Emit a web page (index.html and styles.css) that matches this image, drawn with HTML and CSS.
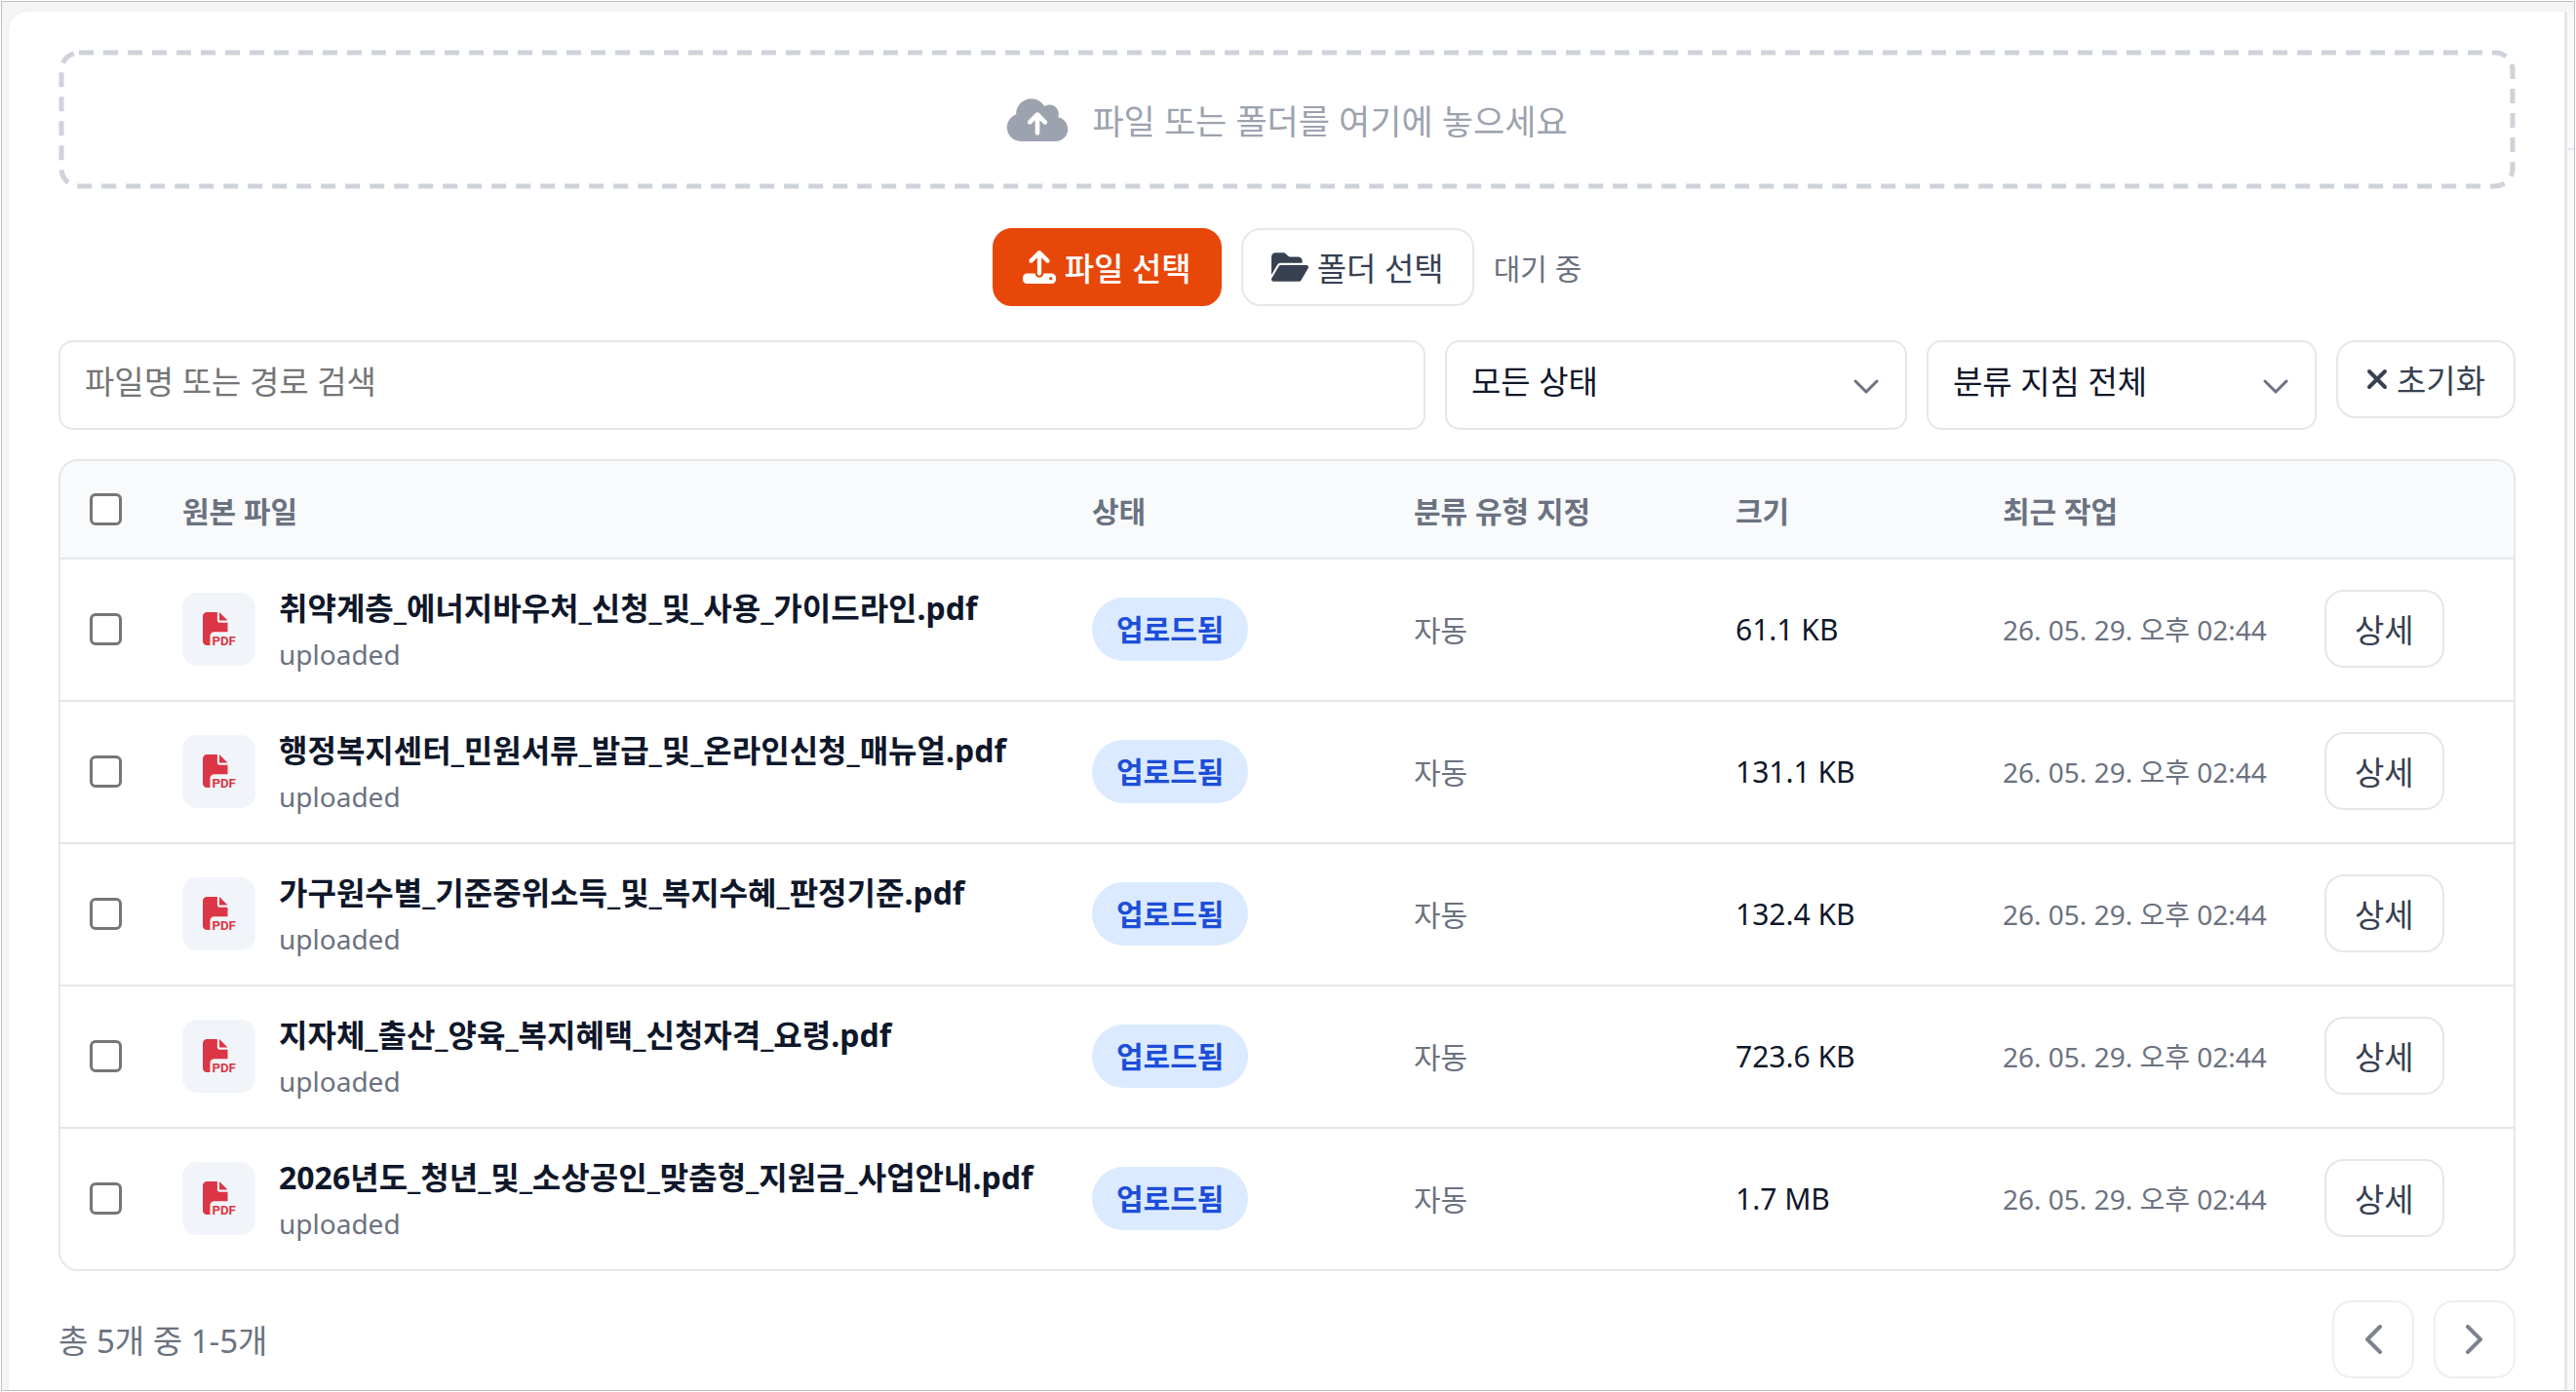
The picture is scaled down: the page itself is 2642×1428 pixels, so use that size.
FILE: index.html
```html
<!DOCTYPE html>
<html lang="ko">
<head>
    <meta charset="UTF-8">
    <meta name="viewport" content="width=device-width, initial-scale=1.0">
    <title>파일 업로드</title>
    <link rel="stylesheet" href="styles.css">
</head>
<body>

    <!-- 아이콘 모음 -->
    <svg class="icon-defs" aria-hidden="true">
        <symbol id="icon-cloud" viewBox="0 0 640 512">
            <path d="M144 480C64.500 480 0 415.500 0 336c0-62.800 40.200-116.200 96.200-135.900c-.1-2.700-.2-5.400-.2-8.100c0-88.400 71.600-160 160-160c59.300 0 111 32.200 138.700 80.200C409.900 102 428.300 96 448 96c53 0 96 43 96 96c0 12.200-2.300 23.800-6.400 34.600C596 238.400 640 290.100 640 352c0 70.700-57.300 128-128 128l-368 0zm79-217c-9.400 9.400-9.400 24.600 0 33.900s24.600 9.400 33.900 0l39-39L296 392c0 13.300 10.700 24 24 24s24-10.700 24-24l0-134.100 39 39c9.400 9.400 24.600 9.400 33.900 0s9.400-24.600 0-33.900l-80-80c-9.400-9.400-24.600-9.400-33.900 0l-80 80z"/>
        </symbol>
        <symbol id="icon-upload" viewBox="0 0 512 512">
            <path d="M288 109.300L288 352c0 17.700-14.300 32-32 32s-32-14.300-32-32l0-242.700-73.400 73.400c-12.500 12.500-32.800 12.500-45.300 0s-12.500-32.800 0-45.300l128-128c12.500-12.500 32.800-12.500 45.300 0l128 128c12.500 12.500 12.500 32.800 0 45.300s-32.800 12.500-45.300 0L288 109.300zM64 352l128 0c0 35.300 28.700 64 64 64s64-28.700 64-64l128 0c35.300 0 64 28.700 64 64l0 32c0 35.300-28.700 64-64 64L64 512c-35.300 0-64-28.700-64-64l0-32c0-35.300 28.700-64 64-64zM432 456a24 24 0 1 0 0-48 24 24 0 1 0 0 48z"/>
        </symbol>
        <symbol id="icon-folder" viewBox="0 0 576 512">
            <path d="M88.700 223.800L0 375.800 0 96C0 60.700 28.700 32 64 32l117.500 0c17 0 33.300 6.700 45.300 18.700l26.500 26.500c12 12 28.300 18.700 45.300 18.700L416 96c35.300 0 64 28.700 64 64l0 32-336 0c-22.800 0-43.800 12.100-55.300 31.800zm27.600 16.100C122.100 230 132.600 224 144 224l400 0c11.500 0 22 6.100 27.700 16.100s5.700 22.200-.1 32.100l-112 192C453.900 474 443.400 480 432 480L32 480c-11.500 0-22-6.100-27.700-16.100s-5.700-22.200 .1-32.100l112-192z"/>
        </symbol>
        <symbol id="icon-file" viewBox="0 0 512 512">
            <path d="M0 64C0 28.700 28.700 0 64 0L224 0l0 128c0 17.700 14.300 32 32 32l128 0 0 144-208 0c-35.300 0-64 28.700-64 64l0 144-48 0c-35.300 0-64-28.700-64-64L0 64zm384 64l-128 0L256 0 384 128z"/>
        </symbol>
        <symbol id="icon-close" viewBox="0 0 22 22">
            <path d="M3 3l16 16M19 3L3 19" fill="none" stroke="currentColor" stroke-width="4" stroke-linecap="round"/>
        </symbol>
        <symbol id="icon-down" viewBox="0 0 26 16">
            <path d="M2 2l11 11L24 2" fill="none" stroke="currentColor" stroke-width="3" stroke-linecap="round" stroke-linejoin="round"/>
        </symbol>
        <symbol id="icon-prev" viewBox="0 0 18 30">
            <path d="M16 2L3 15l13 13" fill="none" stroke="currentColor" stroke-width="4" stroke-linecap="round" stroke-linejoin="round"/>
        </symbol>
        <symbol id="icon-next" viewBox="0 0 18 30">
            <path d="M2 2l13 13L2 28" fill="none" stroke="currentColor" stroke-width="4" stroke-linecap="round" stroke-linejoin="round"/>
        </symbol>
    </svg>

    <div class="frame">
        <main class="panel">

            <div class="dropzone">
                <svg class="dropzone-border" aria-hidden="true"><rect/></svg>
                <svg class="icon-cloud"><use href="#icon-cloud"/></svg>
                <span>파일 또는 폴더를 여기에 놓으세요</span>
            </div>

            <div class="actions">
                <button type="button" class="btn btn-primary"><svg class="icon-upload"><use href="#icon-upload"/></svg>파일 선택</button>
                <button type="button" class="btn"><svg class="icon-folder"><use href="#icon-folder"/></svg>폴더 선택</button>
                <span class="status-text">대기 중</span>
            </div>

            <div class="filters">
                <input type="text" class="field search" placeholder="파일명 또는 경로 검색" aria-label="파일명 또는 경로 검색">
                <div class="select-wrap select-status">
                    <select class="field" aria-label="상태">
                        <option>모든 상태</option>
                    </select>
                    <svg class="icon-down"><use href="#icon-down"/></svg>
                </div>
                <div class="select-wrap select-guide">
                    <select class="field" aria-label="분류 지침">
                        <option>분류 지침 전체</option>
                    </select>
                    <svg class="icon-down"><use href="#icon-down"/></svg>
                </div>
                <button type="button" class="btn"><svg class="icon-close"><use href="#icon-close"/></svg>초기화</button>
            </div>

            <!-- 파일 목록 -->
            <div class="table-wrap">
                <table class="file-table">
                    <thead>
                        <tr>
                            <th class="col-check"><input type="checkbox" aria-label="전체 선택"></th>
                            <th>원본 파일</th>
                            <th class="col-status">상태</th>
                            <th class="col-type">분류 유형 지정</th>
                            <th class="col-size">크기</th>
                            <th class="col-date">최근 작업</th>
                            <th class="col-detail"></th>
                        </tr>
                    </thead>
                    <tbody>
                        <tr>
                            <td><input type="checkbox" aria-label="파일 선택"></td>
                            <td>
                                <div class="file">
                                    <span class="file-icon"><svg viewBox="0 0 512 512"><use href="#icon-file"/><text x="142" y="510">PDF</text></svg></span>
                                    <div class="file-info">
                                        <div class="file-name">취약계층_에너지바우처_신청_및_사용_가이드라인.pdf</div>
                                        <div class="file-path">uploaded</div>
                                    </div>
                                </div>
                            </td>
                            <td><span class="badge">업로드됨</span></td>
                            <td class="type">자동</td>
                            <td class="size">61.1 KB</td>
                            <td class="date">26. 05. 29. 오후 02:44</td>
                            <td><button type="button" class="btn">상세</button></td>
                        </tr>
                        <tr>
                            <td><input type="checkbox" aria-label="파일 선택"></td>
                            <td>
                                <div class="file">
                                    <span class="file-icon"><svg viewBox="0 0 512 512"><use href="#icon-file"/><text x="142" y="510">PDF</text></svg></span>
                                    <div class="file-info">
                                        <div class="file-name">행정복지센터_민원서류_발급_및_온라인신청_매뉴얼.pdf</div>
                                        <div class="file-path">uploaded</div>
                                    </div>
                                </div>
                            </td>
                            <td><span class="badge">업로드됨</span></td>
                            <td class="type">자동</td>
                            <td class="size">131.1 KB</td>
                            <td class="date">26. 05. 29. 오후 02:44</td>
                            <td><button type="button" class="btn">상세</button></td>
                        </tr>
                        <tr>
                            <td><input type="checkbox" aria-label="파일 선택"></td>
                            <td>
                                <div class="file">
                                    <span class="file-icon"><svg viewBox="0 0 512 512"><use href="#icon-file"/><text x="142" y="510">PDF</text></svg></span>
                                    <div class="file-info">
                                        <div class="file-name">가구원수별_기준중위소득_및_복지수혜_판정기준.pdf</div>
                                        <div class="file-path">uploaded</div>
                                    </div>
                                </div>
                            </td>
                            <td><span class="badge">업로드됨</span></td>
                            <td class="type">자동</td>
                            <td class="size">132.4 KB</td>
                            <td class="date">26. 05. 29. 오후 02:44</td>
                            <td><button type="button" class="btn">상세</button></td>
                        </tr>
                        <tr>
                            <td><input type="checkbox" aria-label="파일 선택"></td>
                            <td>
                                <div class="file">
                                    <span class="file-icon"><svg viewBox="0 0 512 512"><use href="#icon-file"/><text x="142" y="510">PDF</text></svg></span>
                                    <div class="file-info">
                                        <div class="file-name">지자체_출산_양육_복지혜택_신청자격_요령.pdf</div>
                                        <div class="file-path">uploaded</div>
                                    </div>
                                </div>
                            </td>
                            <td><span class="badge">업로드됨</span></td>
                            <td class="type">자동</td>
                            <td class="size">723.6 KB</td>
                            <td class="date">26. 05. 29. 오후 02:44</td>
                            <td><button type="button" class="btn">상세</button></td>
                        </tr>
                        <tr>
                            <td><input type="checkbox" aria-label="파일 선택"></td>
                            <td>
                                <div class="file">
                                    <span class="file-icon"><svg viewBox="0 0 512 512"><use href="#icon-file"/><text x="142" y="510">PDF</text></svg></span>
                                    <div class="file-info">
                                        <div class="file-name">2026년도_청년_및_소상공인_맞춤형_지원금_사업안내.pdf</div>
                                        <div class="file-path">uploaded</div>
                                    </div>
                                </div>
                            </td>
                            <td><span class="badge">업로드됨</span></td>
                            <td class="type">자동</td>
                            <td class="size">1.7 MB</td>
                            <td class="date">26. 05. 29. 오후 02:44</td>
                            <td><button type="button" class="btn">상세</button></td>
                        </tr>
                    </tbody>
                </table>
            </div>

            <div class="pagination">
                <span class="page-info">총 5개 중 1-5개</span>
                <div class="page-buttons">
                    <button type="button" class="btn btn-page" aria-label="이전" disabled><svg><use href="#icon-prev"/></svg></button>
                    <button type="button" class="btn btn-page" aria-label="다음" disabled><svg><use href="#icon-next"/></svg></button>
                </div>
            </div>

        </main>
        <aside class="side">
            <div class="side-head"></div>
        </aside>
    </div>

</body>
</html>
```
FILE: styles.css
```css
/* 공통 */
* {
    box-sizing: border-box;
}

body {
    margin: 0;
    padding: 1px;
    background: #fff;
    color: #0f172a;
    font-family: "Noto Sans", "Noto Sans CJK KR", sans-serif;
    font-size: 33px;
}

svg {
    display: block;
    flex: none;
    fill: currentColor;
}

.icon-defs {
    position: absolute;
    width: 0;
    height: 0;
}

.frame {
    display: flex;
    min-height: calc(100vh - 2px);
    padding: 10px 0 0 7px;
    border: 1px solid #c0c0c0;
    background: #f5f5f5;
}

.panel {
    flex: 1;
    min-width: 0;
    padding: 39px 50px 10px 51px;
    background: #fff;
    border-radius: 20px 0 0 0;
    box-shadow: 0 0 4px rgba(0, 0, 0, 0.04);
}

.side {
    width: 10px;
    background: #f9fafb;
    border-left: 3px solid #e5e7eb;
}

.side-head {
    height: 142px;
    border-bottom: 2px solid #e5e7eb;
}

/* 드롭 영역 */
.dropzone {
    position: relative;
    display: flex;
    align-items: center;
    justify-content: center;
    gap: 24px;
    height: 143px;
    color: #9ca3af;
    font-size: 35px;
}

.dropzone-border {
    position: absolute;
    inset: 0;
    width: 100%;
    height: 100%;
}

.dropzone-border rect {
    x: 3px;
    y: 3px;
    width: calc(100% - 6px);
    height: calc(100% - 6px);
    rx: 18px;
    fill: none;
    stroke: #ced3da;
    stroke-width: 5px;
    stroke-dasharray: 15 10;
}

.icon-cloud {
    width: 64px;
    height: 50px;
}

/* 버튼 */
.btn {
    display: inline-flex;
    align-items: center;
    justify-content: center;
    gap: 9px;
    height: 80px;
    padding: 0 29px;
    background: #fff;
    border: 2px solid #e5e7eb;
    border-radius: 20px;
    color: #374151;
    font-family: inherit;
    font-size: 33px;
    white-space: nowrap;
    cursor: pointer;
}

.btn-primary {
    background: #e8470a;
    border-color: #e8470a;
    color: #fff;
    font-weight: 500;
}

.actions {
    display: flex;
    align-items: center;
    justify-content: center;
    gap: 20px;
    margin-top: 40px;
}

.status-text {
    color: #6b7280;
    font-size: 30px;
}

.icon-upload {
    width: 34px;
    height: 34px;
}

.icon-folder {
    width: 38px;
    height: 34px;
}

.icon-close {
    width: 22px;
    height: 22px;
}

/* 검색 및 필터 */
.filters {
    display: flex;
    align-items: flex-start;
    gap: 20px;
    margin-top: 35px;
}

.field {
    width: 100%;
    height: 92px;
    padding: 0 25px 8px;
    background: #fff;
    border: 2px solid #e5e7eb;
    border-radius: 15px;
    color: #0f172a;
    font-family: inherit;
    font-size: 33px;
    appearance: none;
}

.field::placeholder {
    color: #757575;
}

.search {
    flex: 1;
    min-width: 0;
}

.select-wrap {
    position: relative;
}

.select-status {
    width: 474px;
}

.select-guide {
    width: 400px;
}

.icon-down {
    position: absolute;
    right: 29px;
    top: 40px;
    width: 26px;
    height: 16px;
    color: #6b7280;
    pointer-events: none;
}

/* 파일 목록 */
.table-wrap {
    margin-top: 30px;
    border: 2px solid #e5e7eb;
    border-radius: 20px;
    overflow: hidden;
}

.file-table {
    width: 100%;
    border-collapse: collapse;
    table-layout: fixed;
}

.file-table th {
    height: 100px;
    padding: 0 30px;
    background: #f8fafc;
    border-bottom: 2px solid #e5e7eb;
    color: #6b7280;
    font-size: 30px;
    font-weight: 700;
    text-align: left;
}

.file-table td {
    height: 146px;
    padding: 0 30px 2px;
    border-bottom: 2px solid #e5e7eb;
    vertical-align: middle;
    white-space: nowrap;
}

.file-table tr:last-child td {
    height: 145px;
    border-bottom: none;
}

.file-table .btn {
    display: flex;
}

.file-table input {
    display: block;
    width: 33px;
    height: 33px;
    margin: 0;
    background: #fff;
    border: 3px solid #767676;
    border-radius: 6px;
    appearance: none;
}

.col-check {
    width: 95px;
}

.col-status,
.col-type,
.col-date {
    width: 330px;
}

.col-size {
    width: 274px;
}

.col-detail {
    width: 224px;
}

.file {
    display: flex;
    align-items: center;
    gap: 24px;
}

.file-icon {
    display: flex;
    align-items: center;
    justify-content: center;
    flex: none;
    width: 75px;
    height: 75px;
    background: #f1f5f9;
    border-radius: 15px;
    color: #dc3545;
}

.file-icon svg {
    width: 34px;
    height: 34px;
    overflow: visible;
}

.file-icon text {
    font-family: Roboto, sans-serif;
    font-size: 200px;
    font-weight: 700;
}

.file-info {
    padding-top: 6px;
}

.file-name {
    font-size: 32px;
    font-weight: 700;
    line-height: 46px;
}

.file-path {
    color: #6b7280;
    font-size: 28px;
    line-height: 48px;
}

.badge {
    display: inline-block;
    padding: 0 25px;
    background: #dbeafe;
    border-radius: 33px;
    color: #1d4ed8;
    font-size: 30px;
    font-weight: 700;
    line-height: 65px;
    vertical-align: middle;
}

.type {
    color: #6b7280;
    font-size: 30px;
}

.size {
    font-size: 30px;
}

.date {
    color: #6b7280;
    font-size: 28px;
}

/* 페이지 이동 */
.pagination {
    display: flex;
    align-items: center;
    justify-content: space-between;
    margin-top: 30px;
}

.page-info {
    color: #6b7280;
}

.page-buttons {
    display: flex;
    gap: 20px;
}

.btn-page {
    width: 84px;
    padding: 0;
}

.btn-page:disabled {
    opacity: 0.65;
}

.btn-page svg {
    width: 18px;
    height: 30px;
}
```
